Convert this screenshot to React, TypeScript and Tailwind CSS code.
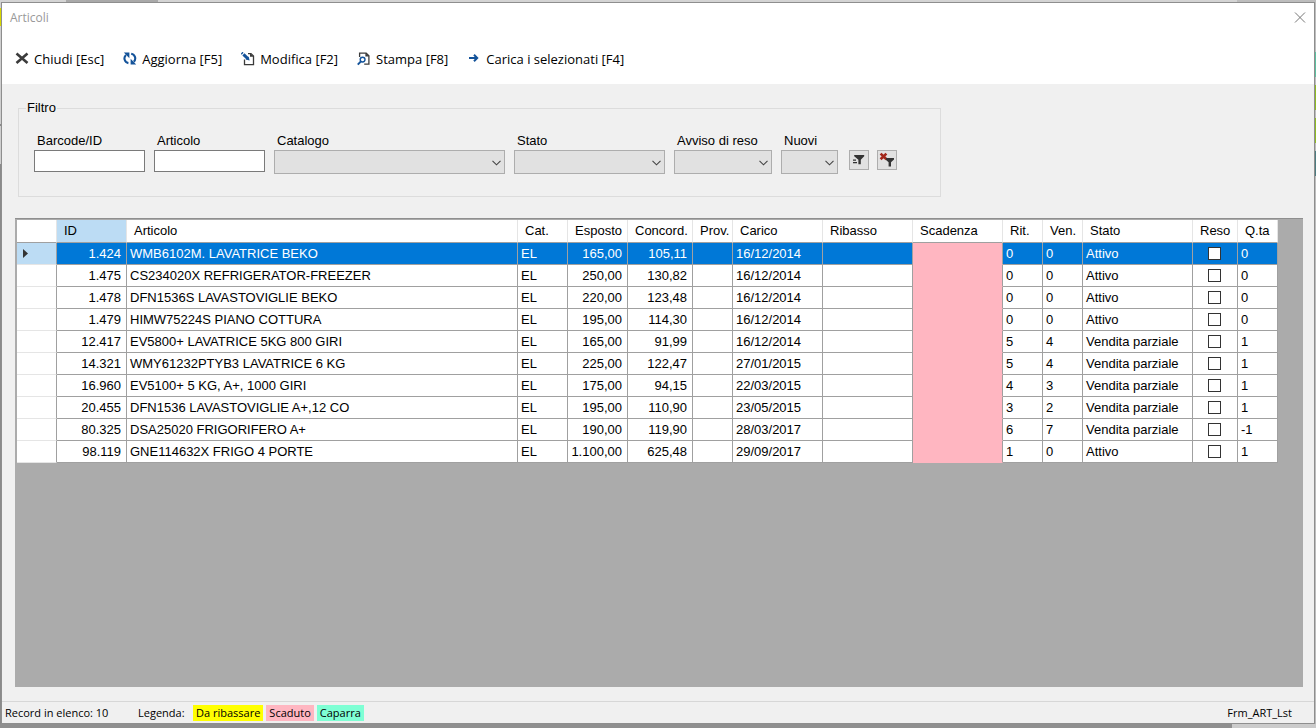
import type { ReactNode } from "react";

type Align = "left" | "right" | "center";

type Article = {
  id: string;
  name: string;
  exposed: string;
  agreed: string;
  loaded: string;
  returned: string;
  sold: string;
  state: string;
  qty: string;
};

const columns: { label: string; width: number; align?: Align }[] = [
  { label: "ID", width: 70, align: "right" },
  { label: "Articolo", width: 391 },
  { label: "Cat.", width: 50 },
  { label: "Esposto", width: 60, align: "right" },
  { label: "Concord.", width: 65, align: "right" },
  { label: "Prov.", width: 40 },
  { label: "Carico", width: 90 },
  { label: "Ribasso", width: 90 },
  { label: "Scadenza", width: 90 },
  { label: "Rit.", width: 40 },
  { label: "Ven.", width: 40 },
  { label: "Stato", width: 110 },
  { label: "Reso", width: 45, align: "center" },
  { label: "Q.ta", width: 40 },
];

const articles: Article[] = [
  { id: "1.424", name: "WMB6102M. LAVATRICE BEKO", exposed: "165,00", agreed: "105,11", loaded: "16/12/2014", returned: "0", sold: "0", state: "Attivo", qty: "0" },
  { id: "1.475", name: "CS234020X REFRIGERATOR-FREEZER", exposed: "250,00", agreed: "130,82", loaded: "16/12/2014", returned: "0", sold: "0", state: "Attivo", qty: "0" },
  { id: "1.478", name: "DFN1536S LAVASTOVIGLIE BEKO", exposed: "220,00", agreed: "123,48", loaded: "16/12/2014", returned: "0", sold: "0", state: "Attivo", qty: "0" },
  { id: "1.479", name: "HIMW75224S PIANO COTTURA", exposed: "195,00", agreed: "114,30", loaded: "16/12/2014", returned: "0", sold: "0", state: "Attivo", qty: "0" },
  { id: "12.417", name: "EV5800+ LAVATRICE 5KG 800 GIRI", exposed: "165,00", agreed: "91,99", loaded: "16/12/2014", returned: "5", sold: "4", state: "Vendita parziale", qty: "1" },
  { id: "14.321", name: "WMY61232PTYB3 LAVATRICE 6 KG", exposed: "225,00", agreed: "122,47", loaded: "27/01/2015", returned: "5", sold: "4", state: "Vendita parziale", qty: "1" },
  { id: "16.960", name: "EV5100+ 5 KG, A+, 1000 GIRI", exposed: "175,00", agreed: "94,15", loaded: "22/03/2015", returned: "4", sold: "3", state: "Vendita parziale", qty: "1" },
  { id: "20.455", name: "DFN1536 LAVASTOVIGLIE A+,12 CO", exposed: "195,00", agreed: "110,90", loaded: "23/05/2015", returned: "3", sold: "2", state: "Vendita parziale", qty: "1" },
  { id: "80.325", name: "DSA25020 FRIGORIFERO A+", exposed: "190,00", agreed: "119,90", loaded: "28/03/2017", returned: "6", sold: "7", state: "Vendita parziale", qty: "-1" },
  { id: "98.119", name: "GNE114632X FRIGO 4 PORTE", exposed: "1.100,00", agreed: "625,48", loaded: "29/09/2017", returned: "1", sold: "0", state: "Attivo", qty: "1" },
];

const CloseIcon = () => (
  <svg viewBox="0 0 14 14" className="size-[14px] shrink-0" fill="none" stroke="#3b3b3b" strokeWidth="2.6">
    <path d="M1.5 1.500 12.5 11M12.5 1.500 1.5 11" />
  </svg>
);

const RefreshIcon = () => (
  <svg viewBox="0 0 14 14" className="size-[14px] shrink-0" fill="none" stroke="#14539a" strokeWidth="2.1">
    <path d="M5.400 11.100A4.700 4.700 0 0 1 3 3" />
    <path d="M8.200 1.700a4.700 4.700 0 0 1 2.600 8" />
    <path d="M.8.600h5.600v5.600z" fill="#14539a" stroke="none" />
    <path d="M13.200 12.400H7.600V6.800z" fill="#14539a" stroke="none" />
  </svg>
);

const EditIcon = () => (
  <svg viewBox="0 0 14 14" className="size-[14px] shrink-0" fill="none">
    <path d="M3.500 7.500v5.200h9V4L10 1.600H7" stroke="#3b3b3b" strokeWidth="1.3" />
    <path d="M9 1.200v3.600h3.800z" fill="#3b3b3b" />
    <path d="M2.400 2.400 6.600 6.400" stroke="#14539a" strokeWidth="3" />
    <path d="M8.600 8.600 4.600 7.400 7.600 4.400z" fill="#14539a" />
    <path d="M.2 2.200 2 .2" stroke="#14539a" strokeWidth="1.4" />
  </svg>
);

const PreviewIcon = () => (
  <svg viewBox="0 0 14 14" className="size-[14px] shrink-0" fill="none">
    <path d="M2.600 5V1.200h6.600l2.700 2.600v8.400H7.200" stroke="#3b3b3b" strokeWidth="1.3" />
    <path d="M8.400 1v3.600h3.800z" fill="#3b3b3b" />
    <circle cx="5.600" cy="7.600" r="2.400" stroke="#14539a" strokeWidth="1.4" />
    <path d="M3.900 9.400.8 12.600" stroke="#14539a" strokeWidth="2" />
  </svg>
);

const ArrowIcon = () => (
  <svg viewBox="0 0 14 14" className="size-[14px] shrink-0" fill="none" stroke="#14539a" strokeWidth="2">
    <path d="M2 6h8" />
    <path d="M7 2.800l3.200 3.200L7 9.200" />
  </svg>
);

const ToolButton = ({ icon, label }: { icon: ReactNode; label: string }) => (
  <button type="button" className="flex items-center gap-[5px] whitespace-nowrap">
    {icon}
    <span>{label}</span>
  </button>
);

const TextFilter = ({ id, label }: { id: string; label: string }) => (
  <div className="flex w-[111px] flex-col">
    <label htmlFor={id} className="pl-[3px] leading-[18px]">{label}</label>
    <input id={id} type="text" className="h-[22px] w-full border border-[#7a7a7a] bg-white px-1 outline-none" />
  </div>
);

const SelectFilter = ({ id, label, className }: { id: string; label: string; className: string }) => (
  <div className={`flex flex-col ${className}`}>
    <label htmlFor={id} className="whitespace-nowrap pl-[3px] leading-[18px]">{label}</label>
    <div className="relative">
      <select id={id} className="block h-6 w-full appearance-none border border-[#adadad] bg-[#e1e1e1] px-1 outline-none">
        <option value=""></option>
      </select>
      <svg viewBox="0 0 9 6" className="pointer-events-none absolute right-1 top-[10px] h-[6px] w-[9px]" fill="none" stroke="#444" strokeWidth="1.1">
        <path d="M.5.8l4 4 4-4" />
      </svg>
    </div>
  </div>
);

const FilterBar = () => (
  <fieldset className="w-[923px] max-w-full border border-[#dcdcdc] px-[15px] pb-[22px]">
    <legend className="-ml-2 px-[1px] leading-5">Filtro</legend>
    <div className="flex gap-[9px] pt-[14px]">
      <TextFilter id="barcode" label="Barcode/ID" />
      <TextFilter id="articolo" label="Articolo" />
      <SelectFilter id="catalogo" label="Catalogo" className="w-[231px]" />
      <SelectFilter id="stato" label="Stato" className="w-[151px]" />
      <SelectFilter id="avviso" label="Avviso di reso" className="w-[98px]" />
      <SelectFilter id="nuovi" label="Nuovi" className="w-[57px]" />
      <div className="flex gap-2 pl-[2px] pt-[18px]">
        <button type="button" aria-label="Applica filtro" className="flex size-5 items-center justify-center border border-[#adadad] bg-[#e1e1e1]">
          <svg viewBox="0 0 14 14" className="size-[14px] shrink-0" fill="#333">
            <path d="M2.200 2h10v1.200L8.800 6.800v4.400H6.400V6.800L2.200 3.200z" />
            <path d="M1 6.600h3v1.200H1zM1 9h4v1.200H1z" />
          </svg>
        </button>
        <button type="button" aria-label="Rimuovi filtro" className="flex size-5 items-center justify-center border border-[#adadad] bg-[#e1e1e1]">
          <svg viewBox="0 0 16 16" className="size-4 shrink-0" fill="none">
            <path d="M1.600 1.600l5.800 5.600M7.400 1.600L1.600 7.200" stroke="#a3281c" strokeWidth="2.6" />
            <path d="M7 6h8v1.400l-3 2.800v4.300H9.600v-4.300L7 8z" fill="#333" />
          </svg>
        </button>
      </div>
    </div>
  </fieldset>
);

const cellBase = "border-b border-r border-[#a0a0a0] px-[3px] whitespace-nowrap overflow-hidden";

const ArticleRow = ({ article, selected }: { article: Article; selected: boolean }) => {
  const cell = `${cellBase} ${selected ? "bg-[#0078d7] text-white" : "bg-white"}`;
  const num = `${cell} pr-[5px] text-right`;
  return (
    <tr className="h-[22px]">
      <th scope="row" className={`border-b border-r border-b-[#e5e5e5] border-r-[#a0a0a0] p-0 pl-[6px] ${selected ? "bg-[#bcdcf4]" : "bg-white"}`}>
        {selected && (
          <svg viewBox="0 0 5 9" className="h-[9px] w-[5px]" fill="#333">
            <path d="M0 0l5 4.500L0 9z" />
          </svg>
        )}
      </th>
      <td className={num}>{article.id}</td>
      <td className={cell}>{article.name}</td>
      <td className={cell}>EL</td>
      <td className={num}>{article.exposed}</td>
      <td className={num}>{article.agreed}</td>
      <td className={cell}></td>
      <td className={cell}>{article.loaded}</td>
      <td className={cell}></td>
      <td className="border-b border-r border-b-[#ffb6c1] border-r-[#a0a0a0] bg-[#ffb6c1]"></td>
      <td className={cell}>{article.returned}</td>
      <td className={cell}>{article.sold}</td>
      <td className={cell}>{article.state}</td>
      <td className={`${cell} pr-[5px]`}>
        <input type="checkbox" aria-label={`Reso ${article.id}`} className="mx-auto block size-[13px] appearance-none border border-[#333] bg-white" />
      </td>
      <td className={cell}>{article.qty}</td>
    </tr>
  );
};

const ArticleGrid = () => (
  <div className="flex-1 overflow-hidden border-t border-[#8f8f8f] bg-[#ababab] pl-[2px] pt-px">
    <table className="w-[1261px] table-fixed border-separate border-spacing-0 leading-5">
      <colgroup>
        <col style={{ width: 40 }} />
        {columns.map((c) => (
          <col key={c.label} style={{ width: c.width }} />
        ))}
      </colgroup>
      <thead>
        <tr className="h-[23px]">
          <td className="border-b border-r border-b-[#a0a0a0] border-r-[#e5e5e5] bg-white"></td>
          {columns.map((c) => (
            <th
              key={c.label}
              scope="col"
              className={`border-b border-r border-b-[#a0a0a0] border-r-[#e5e5e5] p-0 pl-[7px] text-left font-normal whitespace-nowrap ${c.label === "ID" ? "bg-[#bcdcf4]" : "bg-white"}`}
            >
              {c.label}
            </th>
          ))}
        </tr>
      </thead>
      <tbody>
        {articles.map((a, i) => (
          <ArticleRow key={a.id} article={a} selected={i === 0} />
        ))}
      </tbody>
    </table>
  </div>
);

const StatusBar = () => (
  <footer className="flex h-[22px] items-center border-t border-[#d7d7d7] pl-[3px] pr-[22px] font-['Open_Sans',sans-serif] text-[11px] leading-4">
    <span className="w-[133px]">Record in elenco: 10</span>
    <span className="w-[55px]">Legenda:</span>
    <div className="flex gap-[3px]">
      <span className="bg-[#ffff00] px-[3px]">Da ribassare</span>
      <span className="bg-[#ffb6c1] px-[3px]">Scaduto</span>
      <span className="bg-[#7fffd4] px-[3px]">Caparra</span>
    </div>
    <span className="ml-auto">Frm_ART_Lst</span>
  </footer>
);

// slivers of the parent form that show around the dialog
const LeftEdge = () => (
  <div className="flex w-px flex-col bg-[#8a8a8a]">
    <div className="h-[6px] bg-[#d0d0d0]"></div>
    <div className="h-[18px] bg-[#d8d800]"></div>
    <div className="h-[98px] bg-[#cfcfcf]"></div>
    <div className="h-[2px] bg-[#8a8a8a]"></div>
    <div className="h-[38px] bg-[#cfcfcf]"></div>
  </div>
);

const RightEdge = () => (
  <div className="flex w-px flex-col bg-[#bdbdbd]">
    <div className="mt-[50px] h-[25px] bg-[#5cc0a0]"></div>
    <div className="mt-2 h-[25px] bg-[#8dbb22]"></div>
    <div className="mt-2 h-[25px] bg-[#8dbb22]"></div>
    <div className="mt-2 h-[25px] bg-[#4d7c80]"></div>
  </div>
);

export default function App() {
  return (
    <div className="flex h-screen flex-col bg-[#cbcbcb] font-['Liberation_Sans',Arial,sans-serif] text-[13px] text-black">
      <div className="flex h-[2px] shrink-0">
        <div className="w-[5%] bg-[#d4d4d4]"></div>
        <div className="w-[7%] bg-[#a9a9a9]"></div>
        <div className="flex-1 bg-[#d4d4d4]"></div>
        <div className="w-[6%] bg-[#bdbdbd]"></div>
      </div>
      <div className="flex min-h-0 flex-1">
        <LeftEdge />
        <main className="flex min-w-0 flex-1 flex-col border border-[#8e8e8e] bg-[#f0f0f0]">
          <header className="flex h-[81px] shrink-0 flex-col bg-white font-['Open_Sans',sans-serif]">
            <div className="flex h-[30px] items-center justify-between px-2">
              <h1 className="text-xs text-[#999]">Articoli</h1>
              <button type="button" aria-label="Chiudi" className="p-0">
                <svg viewBox="0 0 12 12" className="size-3" fill="none" stroke="#777">
                  <path d="M1 .500l10 10M11 .500L1 10.500" />
                </svg>
              </button>
            </div>
            <nav className="flex items-center gap-[19px] pl-[13px] pt-4 leading-5">
              <ToolButton icon={<CloseIcon />} label="Chiudi [Esc]" />
              <ToolButton icon={<RefreshIcon />} label="Aggiorna [F5]" />
              <ToolButton icon={<EditIcon />} label="Modifica [F2]" />
              <ToolButton icon={<PreviewIcon />} label="Stampa [F8]" />
              <ToolButton icon={<ArrowIcon />} label="Carica i selezionati [F4]" />
            </nav>
          </header>
          <div className="flex min-h-0 flex-1 flex-col pb-[14px] pl-[13px] pr-[11px] pt-[14px]">
            <div className="pb-[21px] pl-[3px]">
              <FilterBar />
            </div>
            <ArticleGrid />
          </div>
          <StatusBar />
        </main>
        <RightEdge />
      </div>
      <div className="flex h-1 shrink-0">
        <div className="flex-1 bg-[#8f8f8f]"></div>
        <div className="w-[84px] bg-[#cbcbcb]"></div>
      </div>
    </div>
  );
}
